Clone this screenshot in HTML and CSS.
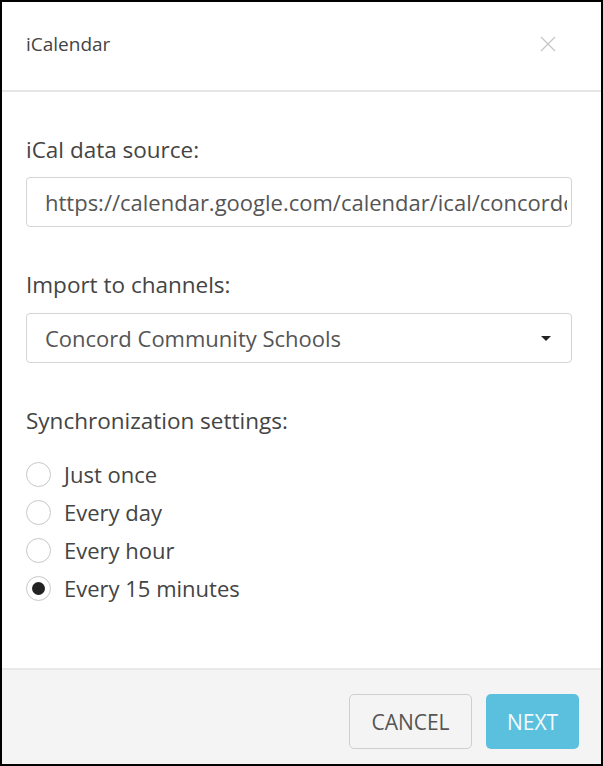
FILE: index.html
```html
<!DOCTYPE html>
<html>
<head>
<meta charset="utf-8">
<link rel="stylesheet" href="styles.css">
</head>
<body>
<div class="modal">
  <div class="modal-header">
    <span class="title">iCalendar</span>
    <span class="close"><svg width="16" height="16" viewBox="0 0 16 16"><path d="M1 1L15 15M15 1L1 15" stroke="#c8c8c8" stroke-width="1.4" fill="none"/></svg></span>
  </div>
  <div class="modal-body">
    <div class="label">iCal data source:</div>
    <div class="field"><span class="value">https://calendar.google.com/calendar/ical/concordcommunityschools</span></div>
    <div class="label second">Import to channels:</div>
    <div class="field select"><span>Concord Community Schools</span><span class="caret"></span></div>
    <div class="label second">Synchronization settings:</div>
    <div class="radios">
      <div class="radio"><span class="circle"></span><span>Just once</span></div>
      <div class="radio"><span class="circle"></span><span>Every day</span></div>
      <div class="radio"><span class="circle"></span><span>Every hour</span></div>
      <div class="radio"><span class="circle checked"></span><span>Every 15 minutes</span></div>
    </div>
  </div>
  <div class="modal-footer">
    <div class="btn cancel">CANCEL</div>
    <div class="btn next">NEXT</div>
  </div>
</div>
</body>
</html>
```
FILE: styles.css
```css
html, body {
  margin: 0;
  padding: 0;
  background: #fff;
}
body {
  font-family: "Open Sans", "Liberation Sans", sans-serif;
  color: #444;
}
.modal {
  width: 603px;
  height: 766px;
  box-sizing: border-box;
  border: 2px solid #000;
  display: flex;
  flex-direction: column;
  background: #fff;
}
.modal-header {
  height: 90px;
  border-bottom: 2px solid #e6e6e6;
  display: flex;
  align-items: center;
  justify-content: space-between;
  padding: 0 45px 0 24px;
  box-sizing: border-box;
  flex: none;
}
.title {
  font-size: 19px;
  color: #444;
  margin-top: -4px;
}
.close {
  display: flex;
  margin-top: -4px;
}
.modal-body {
  flex: 1;
  padding: 44px 29px 0 24px;
}
.label {
  font-size: 22.5px;
  color: #444;
  line-height: 28px;
  margin-bottom: 13px;
}
.label.second {
  margin-top: 44px;
  margin-bottom: 14px;
}
.field {
  height: 50px;
  box-sizing: border-box;
  border: 1px solid #d4d4d4;
  border-radius: 4px;
  padding: 0 0 0 18px;
  font-size: 22px;
  color: #555;
  display: flex;
  align-items: center;
  white-space: nowrap;
}
.value {
  overflow: hidden;
  text-overflow: clip;
  white-space: nowrap;
  flex: 1;
  min-width: 0;
  margin-right: 4px;
}
.select {
  justify-content: space-between;
  padding-right: 20px;
}
.caret {
  width: 0;
  height: 0;
  border-left: 5px solid transparent;
  border-right: 5px solid transparent;
  border-top: 5px solid #222;
}
.radios {
  margin-top: 20px;
  display: flex;
  flex-direction: column;
}
.radio {
  height: 38px;
  display: flex;
  align-items: center;
  font-size: 22px;
  color: #444;
}
.circle {
  width: 25px;
  height: 25px;
  box-sizing: border-box;
  border: 1px solid #c8c8c8;
  border-radius: 50%;
  margin-right: 13px;
  display: flex;
  align-items: center;
  justify-content: center;
  flex: none;
}
.circle.checked::after {
  content: "";
  width: 13px;
  height: 13px;
  border-radius: 50%;
  background: #222;
}
.modal-footer {
  height: 96px;
  flex: none;
  background: #f4f4f4;
  border-top: 2px solid #e8e8e8;
  box-sizing: border-box;
  display: flex;
  align-items: flex-start;
  justify-content: flex-end;
  padding: 24px 22px 0 0;
  gap: 14px;
}
.btn {
  height: 55px;
  box-sizing: border-box;
  border-radius: 5px;
  display: flex;
  align-items: center;
  justify-content: center;
  font-size: 21px;
}
.cancel {
  width: 123px;
  border: 1px solid #cfcfcf;
  color: #555;
  background: #f4f4f4;
}
.next {
  width: 93px;
  background: #5bc0de;
  color: #f2fafd;
}
```
